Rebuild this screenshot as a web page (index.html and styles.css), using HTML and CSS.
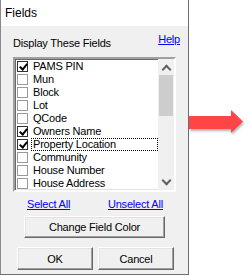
FILE: index.html
```html
<!DOCTYPE html>
<html lang="en">
<head>
  <meta charset="UTF-8" />
  <title>Fields</title>
  <link rel="stylesheet" href="styles.css">
</head>
<body>

  <!-- Fields dialog -->
  <div class="dialog">
    <div class="titlebar">Fields</div>

    <div class="head">
      <span class="label">Display These Fields</span>
      <a class="link help" href="#">Help</a>
    </div>

    <!-- Checked list box -->
    <div class="listbox">
      <ul class="items">
        <li class="checked"><span class="box"></span><span class="text">PAMS PIN</span></li>
        <li><span class="box"></span><span class="text">Mun</span></li>
        <li><span class="box"></span><span class="text">Block</span></li>
        <li><span class="box"></span><span class="text">Lot</span></li>
        <li><span class="box"></span><span class="text">QCode</span></li>
        <li class="checked"><span class="box"></span><span class="text">Owners Name</span></li>
        <li class="checked focus"><span class="box"></span><span class="text">Property Location</span></li>
        <li><span class="box"></span><span class="text">Community</span></li>
        <li><span class="box"></span><span class="text">House Number</span></li>
        <li><span class="box"></span><span class="text">House Address</span></li>
        <li><span class="box"></span><span class="text">Owners Address</span></li>
      </ul>
      <div class="scrollbar">
        <div class="arrow up"></div>
        <div class="track"><div class="thumb"></div></div>
        <div class="arrow down"></div>
      </div>
    </div>

    <div class="links">
      <a class="link" href="#">Select All</a>
      <a class="link" href="#">Unselect All</a>
    </div>

    <button class="btn color-btn">Change Field Color</button>

    <div class="actions">
      <button class="btn">OK</button>
      <button class="btn">Cancel</button>
    </div>
  </div>

  <!-- Pointer arrow -->
  <svg class="pointer" width="58" height="30" viewBox="0 0 58 30">
    <polygon points="0,8 42,8 42,2 54,13.5 42,25 42,21 0,21" fill="#ff4545" />
  </svg>

</body>
</html>
```

FILE: styles.css
```css
* {
  margin: 0;
  padding: 0;
  box-sizing: border-box;
}

body {
  width: 249px;
  height: 276px;
  background: #fff;
  font-family: 'Liberation Sans', Arial, sans-serif;
  font-size: 11px;
  letter-spacing: -0.2px;
  color: #000;
  display: flex;
  align-items: flex-start;
  overflow: hidden;
}

/* Dialog frame */
.dialog {
  width: 189px;
  height: 275px;
  background: #f0f0f0;
  border: 1px solid #6e6e6e;
  border-top: none;
  border-left-color: #8a8a8a;
  flex-shrink: 0;
}

.titlebar {
  height: 26px;
  background: #fff;
  padding-left: 4px;
  line-height: 26px;
  font-size: 12px;
  letter-spacing: 0;
}

.head {
  height: 31px;
  display: flex;
  justify-content: space-between;
  align-items: flex-start;
  padding: 7px 8px 0 12px;
  line-height: 13px;
}

.head .label {
  margin-top: 4px;
}

.link {
  color: #0000ff;
  text-decoration: underline;
  line-height: 13px;
}

/* List box */
.listbox {
  margin-left: 12px;
  width: 163px;
  height: 135px;
  background: #fff;
  border: 2px solid;
  border-color: #a0a0a0 #fff #fff #a0a0a0;
  box-shadow: inset 1px 1px #696969, inset -1px -1px #e3e3e3;
  display: flex;
  overflow: hidden;
}

.items {
  list-style: none;
  flex: 1;
  padding-top: 1px;
  overflow: hidden;
}

.items li {
  height: 13px;
  display: flex;
  align-items: center;
  padding-left: 2px;
}

.box {
  width: 11px;
  height: 11px;
  border: 1px solid #9a9a9a;
  background: #fff;
  flex-shrink: 0;
  position: relative;
}

.checked .box {
  border-color: #333;
}

.checked .box::after {
  content: '';
  position: absolute;
  left: 3px;
  top: 0px;
  width: 3px;
  height: 6px;
  border: solid #000;
  border-width: 0 2px 2px 0;
  transform: rotate(40deg);
}

.text {
  flex: 1;
  height: 13px;
  line-height: 13px;
  margin-left: 3px;
  padding-left: 2px;
  white-space: nowrap;
}

.focus .text {
  outline: 1px dotted #000;
  outline-offset: -1px;
}

/* Scrollbar */
.scrollbar {
  width: 16px;
  display: flex;
  flex-direction: column;
  background: #f0f0f0;
  flex-shrink: 0;
}

.arrow {
  height: 16px;
  position: relative;
}

.arrow::after {
  content: '';
  position: absolute;
  left: 5px;
  width: 5px;
  height: 5px;
  border: solid #606060;
  border-width: 2px 0 0 2px;
}

.arrow.up::after {
  top: 7px;
  transform: rotate(45deg);
}

.arrow.down::after {
  top: 3px;
  transform: rotate(225deg);
}

.track {
  flex: 1;
  padding: 0 1px;
}

.thumb {
  height: 41px;
  background: #cdcdcd;
}

.links {
  display: flex;
  justify-content: space-between;
  padding: 0 25px 0 26px;
  margin-top: 6px;
  height: 13px;
}

/* Buttons */
.btn {
  font-family: inherit;
  font-size: 11px;
  letter-spacing: -0.2px;
  color: #000;
  background: #f0f0f0;
  border: 1px solid;
  border-color: #fff #696969 #696969 #fff;
  box-shadow: inset -1px -1px #a0a0a0, inset 1px 1px #e3e3e3;
  display: block;
}

.color-btn {
  margin: 5px 0 0 23px;
  width: 141px;
  height: 22px;
}

.actions {
  display: flex;
  gap: 5px;
  margin: 9px 0 0 16px;
}

.actions .btn {
  width: 76px;
  height: 23px;
}

.pointer {
  margin-top: 108px;
  flex-shrink: 0;
  filter: drop-shadow(1px 2px 1px rgba(0, 0, 0, 0.3));
}
```
